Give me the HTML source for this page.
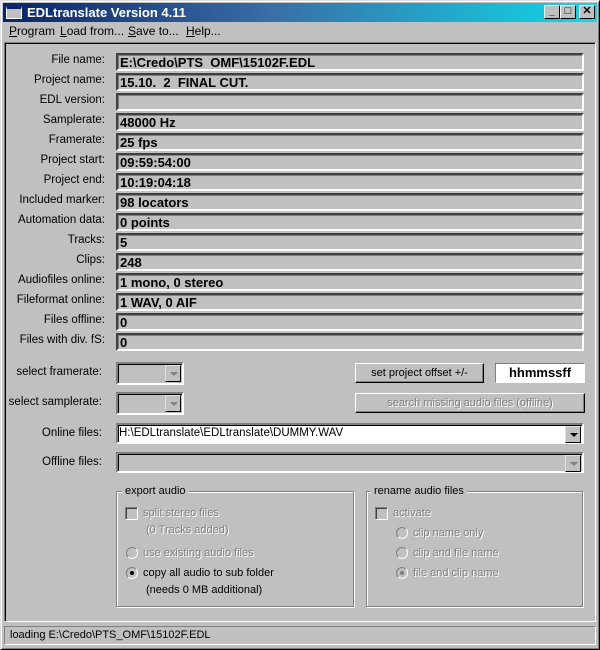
<!DOCTYPE html>
<html><head><style>
*{margin:0;padding:0;box-sizing:border-box}
body{width:600px;height:650px;background:#c0c0c0;font-family:"Liberation Sans",Arial,sans-serif;font-size:11px;color:#000;position:relative;overflow:hidden}
.a{position:absolute}
.win{left:0;top:0;width:600px;height:650px;border:1px solid;border-color:#dfdfdf #000 #000 #dfdfdf;box-shadow:inset 1px 1px #fff,inset -1px -1px #808080}
.title{left:3px;top:3px;width:594px;height:19px;background:linear-gradient(90deg,#0a246a,#3a6ea5 45%,#10d8e8);color:#fff;font-weight:bold;font-size:13px;line-height:19px;padding-left:24px}
.tb{top:5px;width:16px;height:14px;background:#c0c0c0;border:1px solid;border-color:#fff #000 #000 #fff;font-size:11px;line-height:11px;text-align:center;font-weight:bold}
.menu span{position:absolute;top:24px;font-size:12px}
.panel{left:4px;top:42px;width:592px;height:580px;border:1px solid;border-color:#808080 #fff #fff #808080;box-shadow:inset 1px 1px #000}
.lbl{width:101px;text-align:right;font-size:11.5px;left:4px;margin-top:1px}
.fld{left:116px;width:468px;height:18px;border:2px solid;border-color:#404040 #fff #fff #404040;box-shadow:inset 1px 1px #808080;font-weight:bold;font-size:13px;line-height:15px;padding-left:2px;white-space:pre}
.btn{border:1px solid;border-color:#fff #000 #000 #fff;box-shadow:inset -1px -1px #808080;text-align:center;font-size:11px}
.sunk{border:2px solid;border-color:#808080 #fff #fff #808080;box-shadow:inset 1px 1px #000}
.arr{position:absolute;right:1px;top:1px;width:16px;height:17px;background:#c0c0c0;border:1px solid;border-color:#dfdfdf #000 #000 #dfdfdf}
.arr:after{content:"";position:absolute;left:4px;top:6px;border:4px solid transparent;border-top:4px solid #000;border-bottom:0}
.arr.g:after{border-top-color:#808080}
.grp{border:1px solid #808080;box-shadow:1px 1px #fff,inset 1px 1px #fff}
.gt{background:#c0c0c0;padding:0 3px;font-size:11px}
.dis{color:#808080;text-shadow:1px 1px #fff}
.cb{width:13px;height:13px;border:1px solid;border-color:#808080 #fff #fff #808080;box-shadow:inset 1px 1px #404040}
.rb{width:12px;height:12px;border-radius:50%;border:1px solid;border-color:#808080 #fff #fff #808080;background:#c0c0c0}
</style></head><body>
<div class="a win"></div>
<div class="a title">EDLtranslate Version 4.11</div>
<div class="a" style="left:6px;top:6px;width:16px;height:13px;background:#c0c0c0;border:1px solid #fff;border-top:3px solid #0a246a"></div>
<div class="a tb" style="left:544px">_</div>
<div class="a tb" style="left:560px">□</div>
<div class="a tb" style="left:579px">✕</div>
<div class="menu"><span style="left:9px"><u>P</u>rogram</span><span style="left:60px"><u>L</u>oad from...</span><span style="left:128px"><u>S</u>ave to...</span><span style="left:186px"><u>H</u>elp...</span></div>
<div class="a panel"></div>

<div class="a lbl" style="top:53px">File name:</div><div class="a fld" style="top:53px">E:\Credo\PTS  OMF\15102F.EDL</div>
<div class="a lbl" style="top:73px">Project name:</div><div class="a fld" style="top:73px">15.10.  2  FINAL CUT.</div>
<div class="a lbl" style="top:93px">EDL version:</div><div class="a fld" style="top:93px"></div>
<div class="a lbl" style="top:113px">Samplerate:</div><div class="a fld" style="top:113px">48000 Hz</div>
<div class="a lbl" style="top:133px">Framerate:</div><div class="a fld" style="top:133px">25 fps</div>
<div class="a lbl" style="top:153px">Project start:</div><div class="a fld" style="top:153px">09:59:54:00</div>
<div class="a lbl" style="top:173px">Project end:</div><div class="a fld" style="top:173px">10:19:04:18</div>
<div class="a lbl" style="top:193px">Included marker:</div><div class="a fld" style="top:193px">98 locators</div>
<div class="a lbl" style="top:213px">Automation data:</div><div class="a fld" style="top:213px">0 points</div>
<div class="a lbl" style="top:233px">Tracks:</div><div class="a fld" style="top:233px">5</div>
<div class="a lbl" style="top:253px">Clips:</div><div class="a fld" style="top:253px">248</div>
<div class="a lbl" style="top:273px">Audiofiles online:</div><div class="a fld" style="top:273px">1 mono, 0 stereo</div>
<div class="a lbl" style="top:293px">Fileformat online:</div><div class="a fld" style="top:293px">1 WAV, 0 AIF</div>
<div class="a lbl" style="top:313px">Files offline:</div><div class="a fld" style="top:313px">0</div>
<div class="a lbl" style="top:333px">Files with div. fS:</div><div class="a fld" style="top:333px">0</div>

<div class="a" style="left:10px;top:366px;width:92px;text-align:right;font-size:11.5px">select framerate:</div>
<div class="a sunk" style="left:116px;top:362px;width:68px;height:23px"><div class="arr g"></div></div>
<div class="a" style="left:6px;top:396px;width:96px;text-align:right;font-size:11.5px">select samplerate:</div>
<div class="a sunk" style="left:116px;top:392px;width:68px;height:23px"><div class="arr g"></div></div>
<div class="a btn" style="left:355px;top:363px;width:129px;height:20px;line-height:18px">set project offset +/-</div>
<div class="a" style="left:495px;top:363px;width:90px;height:20px;border:1px solid;border-color:#808080 #fff #fff #808080;background:#fff;font-weight:bold;font-size:13px;text-align:center;line-height:18px">hhmmssff</div>
<div class="a btn dis" style="left:355px;top:393px;width:230px;height:20px;line-height:18px">search missing audio files (offline)</div>
<div class="a" style="left:10px;top:427px;width:92px;text-align:right;font-size:11.5px">Online files:</div>
<div class="a sunk" style="left:116px;top:423px;width:468px;height:21px;background:#fff;font-size:11.5px;line-height:17px;padding-left:1px">H:\EDLtranslate\EDLtranslate\DUMMY.WAV<div class="arr" style="height:17px"></div></div>
<div class="a" style="left:10px;top:456px;width:92px;text-align:right;font-size:11.5px">Offline files:</div>
<div class="a sunk" style="left:116px;top:452px;width:468px;height:21px"><div class="arr g"></div></div>

<div class="a grp" style="left:116px;top:491px;width:238px;height:116px"></div>
<div class="a gt" style="left:122px;top:485px">export audio</div>
<div class="a cb" style="left:125px;top:507px"></div><div class="a dis" style="left:143px;top:507px">split stereo files</div>
<div class="a dis" style="left:146px;top:524px">(0 Tracks added)</div>
<div class="a rb" style="left:126px;top:547px"></div><div class="a dis" style="left:143px;top:547px">use existing audio files</div>
<div class="a rb" style="left:126px;top:567px"></div><div class="a" style="left:130px;top:571px;width:4px;height:4px;background:#000;border-radius:50%"></div>
<div class="a" style="left:143px;top:567px">copy all audio to sub folder</div>
<div class="a" style="left:146px;top:584px">(needs 0 MB additional)</div>

<div class="a grp" style="left:366px;top:491px;width:217px;height:116px"></div>
<div class="a gt" style="left:371px;top:485px">rename audio files</div>
<div class="a cb" style="left:375px;top:507px"></div><div class="a dis" style="left:393px;top:507px">activate</div>
<div class="a rb" style="left:396px;top:527px"></div><div class="a dis" style="left:413px;top:527px">clip name only</div>
<div class="a rb" style="left:396px;top:547px"></div><div class="a dis" style="left:413px;top:547px">clip and file name</div>
<div class="a rb" style="left:396px;top:567px"></div><div class="a" style="left:400px;top:571px;width:4px;height:4px;background:#808080;border-radius:50%"></div>
<div class="a dis" style="left:413px;top:567px">file and clip name</div>

<div class="a" style="left:4px;top:626px;width:592px;height:19px;border:1px solid;border-color:#808080 #fff #fff #808080;padding-left:5px;line-height:17px">loading E:\Credo\PTS_OMF\15102F.EDL</div>
</body></html>
